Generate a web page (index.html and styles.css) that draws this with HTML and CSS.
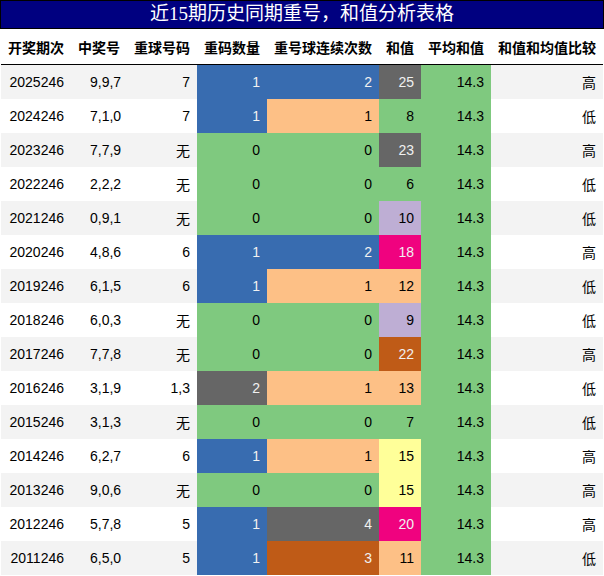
FILE: index.html
```html
<!DOCTYPE html>
<html lang="zh">
<head>
<meta charset="utf-8">
<link rel="stylesheet" href="styles.css">
</head>
<body>
<div class="wrap">
  <div class="title">近15期历史同期重号，和值分析表格</div>
  <table class="tbl">
    <colgroup>
      <col class="w70"><col class="w56"><col class="w70"><col class="w70"><col class="w112"><col class="w42"><col class="w70"><col class="w112">
    </colgroup>
    <thead>
      <tr><th>开奖期次</th><th>中奖号</th><th>重球号码</th><th>重码数量</th><th>重号球连续次数</th><th>和值</th><th>平均和值</th><th>和值和均值比较</th></tr>
    </thead>
    <tbody>
      <tr><td>2025246</td><td class="l2">9,9,7</td><td>7</td><td class="blue">1</td><td class="blue">2</td><td class="grey">25</td><td class="green">14.3</td><td>高</td></tr>
      <tr><td>2024246</td><td class="l2">7,1,0</td><td>7</td><td class="blue">1</td><td class="orange">1</td><td class="green">8</td><td class="green">14.3</td><td>低</td></tr>
      <tr><td>2023246</td><td class="l2">7,7,9</td><td>无</td><td class="green">0</td><td class="green">0</td><td class="grey">23</td><td class="green">14.3</td><td>高</td></tr>
      <tr><td>2022246</td><td class="l2">2,2,2</td><td>无</td><td class="green">0</td><td class="green">0</td><td class="green">6</td><td class="green">14.3</td><td>低</td></tr>
      <tr><td>2021246</td><td class="l2">0,9,1</td><td>无</td><td class="green">0</td><td class="green">0</td><td class="purple">10</td><td class="green">14.3</td><td>低</td></tr>
      <tr><td>2020246</td><td class="l2">4,8,6</td><td>6</td><td class="blue">1</td><td class="blue">2</td><td class="pink">18</td><td class="green">14.3</td><td>高</td></tr>
      <tr><td>2019246</td><td class="l2">6,1,5</td><td>6</td><td class="blue">1</td><td class="orange">1</td><td class="orange">12</td><td class="green">14.3</td><td>低</td></tr>
      <tr><td>2018246</td><td class="l2">6,0,3</td><td>无</td><td class="green">0</td><td class="green">0</td><td class="purple">9</td><td class="green">14.3</td><td>低</td></tr>
      <tr><td>2017246</td><td class="l2">7,7,8</td><td>无</td><td class="green">0</td><td class="green">0</td><td class="brown">22</td><td class="green">14.3</td><td>高</td></tr>
      <tr><td>2016246</td><td class="l2">3,1,9</td><td>1,3</td><td class="grey">2</td><td class="orange">1</td><td class="orange">13</td><td class="green">14.3</td><td>低</td></tr>
      <tr><td>2015246</td><td class="l2">3,1,3</td><td>无</td><td class="green">0</td><td class="green">0</td><td class="green">7</td><td class="green">14.3</td><td>低</td></tr>
      <tr><td>2014246</td><td class="l2">6,2,7</td><td>6</td><td class="blue">1</td><td class="orange">1</td><td class="yellow">15</td><td class="green">14.3</td><td>高</td></tr>
      <tr><td>2013246</td><td class="l2">9,0,6</td><td>无</td><td class="green">0</td><td class="green">0</td><td class="yellow">15</td><td class="green">14.3</td><td>高</td></tr>
      <tr><td>2012246</td><td class="l2">5,7,8</td><td>5</td><td class="blue">1</td><td class="grey">4</td><td class="pink">20</td><td class="green">14.3</td><td>高</td></tr>
      <tr><td>2011246</td><td class="l2">6,5,0</td><td>5</td><td class="blue">1</td><td class="brown">3</td><td class="orange">11</td><td class="green">14.3</td><td>低</td></tr>
    </tbody>
  </table>
</div>
</body>
</html>
```
FILE: styles.css
```css
html, body {
  margin: 0;
  padding: 0;
  background: #ffffff;
}
.wrap {
  width: 604px;
}
.title {
  box-sizing: border-box;
  height: 29px;
  background: #000080;
  border: 1px solid #000;
  color: #ffffff;
  font-family: "Liberation Serif", "Noto Sans CJK SC", serif;
  font-size: 19px;
  line-height: 26px;
  text-align: center;
}
.tbl {
  margin-left: 1px;
  border-collapse: collapse;
  table-layout: fixed;
  width: 602px;
  font-family: "Liberation Sans", "Noto Sans CJK SC", sans-serif;
  font-size: 14px;
  color: #000;
}
.w70 { width: 70px; }
.w56 { width: 56px; }
.w112 { width: 112px; }
.w42 { width: 42px; }
.tbl th {
  height: 35px;
  padding: 0 7px;
  font-weight: bold;
  text-align: right;
  white-space: nowrap;
  border-bottom: 1px solid #000;
  vertical-align: middle;
}
.tbl td {
  height: 34px;
  padding: 0 7px;
  text-align: right;
  white-space: nowrap;
  vertical-align: middle;
}
.tbl td.l2 {
  text-align: left;
  padding-left: 19px;
}
.tbl tbody tr:nth-child(odd) { background: #f3f3f3; }
.tbl tbody tr:nth-child(even) { background: #ffffff; }
.tbl td.green { background: #7fc97f; color: #000; }
.tbl td.purple { background: #beaed4; color: #000; }
.tbl td.orange { background: #fdc086; color: #000; }
.tbl td.yellow { background: #ffff99; color: #000; }
.tbl td.blue { background: #386cb0; color: #f1f1f1; }
.tbl td.pink { background: #f0027f; color: #f1f1f1; }
.tbl td.brown { background: #bf5b17; color: #f1f1f1; }
.tbl td.grey { background: #666666; color: #f1f1f1; }
```
